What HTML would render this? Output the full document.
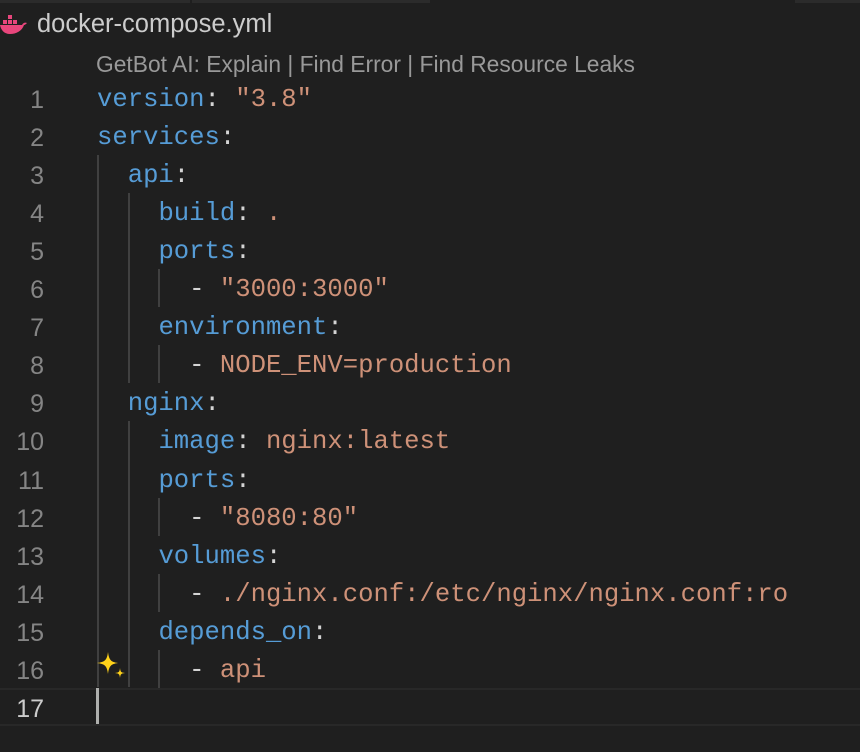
<!DOCTYPE html>
<html><head><meta charset="utf-8"><style>
html,body{margin:0;padding:0;background:#1f1f1f;width:860px;height:752px;overflow:hidden;position:relative}
.code{position:absolute;left:0;font-family:"Liberation Mono",monospace;font-size:25.6px;white-space:pre;height:38px;line-height:38px;margin-top:2px}
.ln{position:absolute;width:44px;text-align:right;font-family:"Liberation Sans",sans-serif;font-size:25px;color:#858585;height:38px;line-height:38px;margin-top:2px}
.k{color:#569cd6}.s{color:#ce9178}.p{color:#d4d4d4}
.g{position:absolute;width:2px;background:#404040}
</style></head><body>
<div style="position:absolute;left:0;top:0;width:190px;height:3px;background:#2b2b2b"></div>
<div style="position:absolute;left:192px;top:0;width:238px;height:3px;background:#2b2b2b"></div>
<div style="position:absolute;left:795px;top:0;width:65px;height:3px;background:#2b2b2b"></div>
<svg style="position:absolute;left:0;top:14px" width="28" height="22" viewBox="0 0 28 22">
<g fill="#e8467c"><rect x="3" y="6" width="4" height="4"/><rect x="8" y="6" width="4" height="4"/><rect x="8" y="1" width="4" height="4"/><rect x="13" y="6" width="4" height="4"/><path d="M0 11h22c1-2 3-3 5-2-1 1-2 2-3 2-2 6-8 9-14 9C4 20 1 16 0 11z"/></g></svg>
<div style="position:absolute;left:37px;top:10px;font-family:'Liberation Sans',sans-serif;font-size:25.5px;color:#cccccc">docker-compose.yml</div>
<div style="position:absolute;left:96px;top:51px;font-family:'Liberation Sans',sans-serif;font-size:22.8px;color:#999999">GetBot AI: Explain | Find Error | Find Resource Leaks</div>
<div style="position:absolute;left:0;top:688px;width:860px;height:34px;border-top:2px solid #282828;border-bottom:2px solid #282828"></div>
<div style="position:absolute;left:96px;top:688px;width:3px;height:36px;background:#aeafad"></div>
<div class="g" style="left:97px;top:155px;height:532px"></div>
<div class="g" style="left:128px;top:193px;height:190px"></div>
<div class="g" style="left:128px;top:421px;height:266px"></div>
<div class="g" style="left:158px;top:269px;height:38px"></div>
<div class="g" style="left:158px;top:345px;height:38px"></div>
<div class="g" style="left:158px;top:498px;height:38px"></div>
<div class="g" style="left:158px;top:574px;height:38px"></div>
<div class="g" style="left:158px;top:650px;height:38px"></div>
<svg style="position:absolute;left:96px;top:652px" width="32" height="30" viewBox="0 0 32 30"><path fill="#ffd21a" d="M12 0C13 8 15 10 22 11 15 12 13 14 12 22 11 14 9 12 1 11 9 10 11 8 12 0z"/><path fill="#ffd21a" d="M24 16C24.5 20 25 20.5 29 21 25 21.5 24.5 22 24 26 23.5 22 23 21.5 19 21 23 20.5 23.5 20 24 16z"/></svg>
<div class="ln" style="top:79px">1</div><div class="code" style="left:97px;top:79px"><span class="k">version</span><span class="p">: </span><span class="s">"3.8"</span></div>
<div class="ln" style="top:117px">2</div><div class="code" style="left:97px;top:117px"><span class="k">services</span><span class="p">:</span></div>
<div class="ln" style="top:155px">3</div><div class="code" style="left:97px;top:155px">  <span class="k">api</span><span class="p">:</span></div>
<div class="ln" style="top:193px">4</div><div class="code" style="left:97px;top:193px">    <span class="k">build</span><span class="p">: </span><span class="s">.</span></div>
<div class="ln" style="top:231px">5</div><div class="code" style="left:97px;top:231px">    <span class="k">ports</span><span class="p">:</span></div>
<div class="ln" style="top:269px">6</div><div class="code" style="left:97px;top:269px">      <span class="p">- </span><span class="s">"3000:3000"</span></div>
<div class="ln" style="top:307px">7</div><div class="code" style="left:97px;top:307px">    <span class="k">environment</span><span class="p">:</span></div>
<div class="ln" style="top:345px">8</div><div class="code" style="left:97px;top:345px">      <span class="p">- </span><span class="s">NODE_ENV=production</span></div>
<div class="ln" style="top:383px">9</div><div class="code" style="left:97px;top:383px">  <span class="k">nginx</span><span class="p">:</span></div>
<div class="ln" style="top:421px">10</div><div class="code" style="left:97px;top:421px">    <span class="k">image</span><span class="p">: </span><span class="s">nginx:latest</span></div>
<div class="ln" style="top:460px">11</div><div class="code" style="left:97px;top:460px">    <span class="k">ports</span><span class="p">:</span></div>
<div class="ln" style="top:498px">12</div><div class="code" style="left:97px;top:498px">      <span class="p">- </span><span class="s">"8080:80"</span></div>
<div class="ln" style="top:536px">13</div><div class="code" style="left:97px;top:536px">    <span class="k">volumes</span><span class="p">:</span></div>
<div class="ln" style="top:574px">14</div><div class="code" style="left:97px;top:574px">      <span class="p">- </span><span class="s">./nginx.conf:/etc/nginx/nginx.conf:ro</span></div>
<div class="ln" style="top:612px">15</div><div class="code" style="left:97px;top:612px">    <span class="k">depends_on</span><span class="p">:</span></div>
<div class="ln" style="top:650px">16</div><div class="code" style="left:97px;top:650px">      <span class="p">- </span><span class="s">api</span></div>
<div class="ln" style="top:688px;color:#cccccc">17</div>
</body></html>
